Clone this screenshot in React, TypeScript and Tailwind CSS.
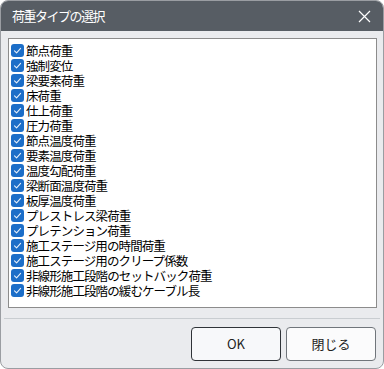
import React from "react";

const items = [
  "節点荷重",
  "強制変位",
  "梁要素荷重",
  "床荷重",
  "仕上荷重",
  "圧力荷重",
  "節点温度荷重",
  "要素温度荷重",
  "温度勾配荷重",
  "梁断面温度荷重",
  "板厚温度荷重",
  "プレストレス梁荷重",
  "プレテンション荷重",
  "施工ステージ用の時間荷重",
  "施工ステージ用のクリープ係数",
  "非線形施工段階のセットバック荷重",
  "非線形施工段階の緩むケーブル長",
];

function Check() {
  return (
    <div className="w-[13px] h-[13px] rounded-[3px] bg-[#1c6ec8] flex items-center justify-center shrink-0">
      <svg width="9" height="9" viewBox="0 0 9 9" fill="none">
        <path d="M1.5 4.8 L3.6 6.8 L7.6 2.4" stroke="#e8f0fa" strokeWidth="1.1" strokeLinecap="round" strokeLinejoin="round" />
      </svg>
    </div>
  );
}

export default function App() {
  return (
    <div
      className="w-[384px] h-[369px] bg-white"
      style={{ fontFamily: '"Noto Sans CJK JP", "Noto Sans", sans-serif' }}
    >
      <div className="w-full h-full rounded-[8px] overflow-hidden border border-[#9a9da2] bg-[#eaebee] flex flex-col">
        <div className="h-[30px] bg-[#575d64] flex items-center justify-between pl-[11px] pr-[12px] shrink-0">
          <span className="text-white text-[13px] leading-[16px] tracking-[-1.5px]">荷重タイプの選択</span>
          <svg width="13" height="13" viewBox="0 0 13 13">
            <path d="M1 1 L12 12 M12 1 L1 12" stroke="#ffffff" strokeWidth="1.2" />
          </svg>
        </div>
        <div className="flex-1 flex flex-col">
          <div className="mt-[7px] ml-[7px] mr-[6px] h-[270px] bg-white border border-[#8c8c8c] pt-[4px] pl-[2px]">
            {items.map((t) => (
              <div key={t} className="h-[15px] flex items-center gap-[2px]">
                <Check />
                <span className="text-[12.5px] leading-[15px] text-black tracking-[-0.9px]">{t}</span>
              </div>
            ))}
          </div>
          <div className="mt-[10px] mx-[3px] h-px bg-[#c9cdd1]" />
          <div className="flex justify-end gap-[5px] pr-[7px] pt-[8px]">
            <button className="w-[90px] h-[34px] rounded-[4px] border border-[#2f3338] bg-[#f7f8fa] text-[13px] text-[#222]">
              OK
            </button>
            <button className="w-[90px] h-[34px] rounded-[4px] border border-[#70757b] bg-[#fbfbfc] text-[13px] text-[#222]">
              閉じる
            </button>
          </div>
        </div>
      </div>
    </div>
  );
}
